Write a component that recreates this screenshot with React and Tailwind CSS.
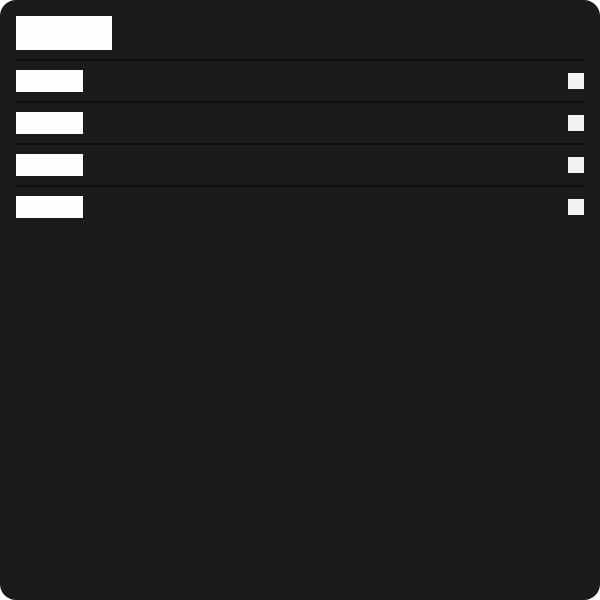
export default function App() {
  const rows = [1, 2, 3, 4];
  return (
    <div className="w-[600px] h-[600px] bg-[#fdfdfd]">
      <div className="w-full h-full rounded-2xl bg-[#1b1b1b] p-4">
        {/* Header */}
        <div className="h-[34px] w-[96px] bg-[#fdfdfd] mb-[9px]" />

        {/* Rows */}
        {rows.map((r) => (
          <div
            key={r}
            className="flex items-center justify-between border-t-2 border-[#0e0e0e] py-[9px]"
          >
            <div className="h-[22px] w-[66.5px] bg-[#fdfdfd]" />
            <div className="h-4 w-4 bg-[#f1f0f7]" />
          </div>
        ))}
      </div>
    </div>
  );
}
